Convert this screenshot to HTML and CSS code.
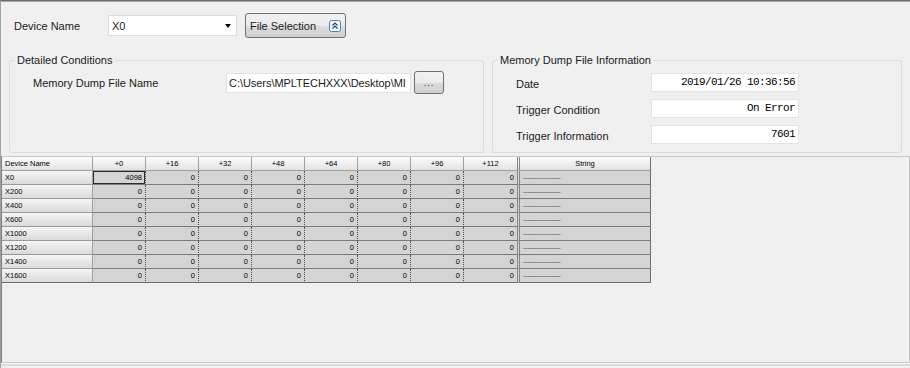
FILE: index.html
```html
<!DOCTYPE html>
<html lang="en">
<head>
  <meta charset="UTF-8">
  <title>Memory Dump</title>
  <link rel="stylesheet" href="styles.css">
</head>
<body>
  <div class="window">
    <div class="toolbar">
      <span class="device-label">Device Name</span>
      <div class="combo"><span>X0</span><span class="combo-arrow"></span></div>
      <button class="btn file-btn">
        <span>File Selection</span>
        <svg class="fold-icon" width="12" height="12" viewBox="0 0 12 12">
          <rect x="0.5" y="0.5" width="11" height="11" rx="2" fill="#f4f8fc" stroke="#4d7fb8"/>
          <path d="M3.5 5.5 L6 3 L8.5 5.5 M3.5 8.5 L6 6 L8.5 8.5" fill="none" stroke="#1f3f6f" stroke-width="1.2"/>
        </svg>
      </button>
    </div>

    <div class="groups">
      <fieldset class="group cond">
        <legend>Detailed Conditions</legend>
        <div class="file-row">
          <span class="file-label">Memory Dump File Name</span>
          <div class="textbox path">C:\Users\MPLTECHXXX\Desktop\MI</div>
          <button class="btn browse">...</button>
        </div>
      </fieldset>

      <fieldset class="group info">
        <legend>Memory Dump File Information</legend>
        <div class="info-grid">
          <span class="info-label">Date</span><div class="textbox mono">2019/01/26 10:36:56</div>
          <span class="info-label">Trigger Condition</span><div class="textbox mono">On Error</div>
          <span class="info-label">Trigger Information</span><div class="textbox mono">7601</div>
        </div>
      </fieldset>
    </div>

    <div class="grid-panel">
      <table class="dump">
        <colgroup>
          <col class="c-name">
          <col class="c-val"><col class="c-val"><col class="c-val"><col class="c-val">
          <col class="c-val"><col class="c-val"><col class="c-val"><col class="c-val">
          <col class="c-str">
        </colgroup>
        <thead>
          <tr>
            <th class="h-name">Device Name</th>
            <th>+0</th><th>+16</th><th>+32</th><th>+48</th>
            <th>+64</th><th>+80</th><th>+96</th><th class="last-val">+112</th>
            <th class="h-str">String</th>
          </tr>
        </thead>
        <tbody id="dumpRows"></tbody>
      </table>
    </div>
    <div class="statusbar"></div>
  </div>

  <script>
    const devices = ['X0', 'X200', 'X400', 'X600', 'X1000', 'X1200', 'X1400', 'X1600'];
    const tbody = document.getElementById('dumpRows');
    let html = '';
    devices.forEach((name, i) => {
      html += `<tr><td class="row-head">${name}</td>`;
      for (let c = 0; c < 8; c++) {
        const first = i === 0 && c === 0;
        const cls = [first ? 'selected' : '', c === 7 ? 'last-val' : ''].join(' ').trim();
        html += `<td class="${cls}">${first ? 4098 : 0}</td>`;
      }
      html += `<td class="str">-----------------</td></tr>`;
    });
    tbody.innerHTML = html;
  </script>
</body>
</html>
```

FILE: styles.css
```css
body { margin: 0; background: #f0f0f0; font-family: "Liberation Sans", Arial, sans-serif; font-size: 11px; color: #1a1a1a; overflow: hidden; }
.window { height: 368px; box-sizing: border-box; border-top: 1px solid #6d6d6d; border-left: 1px solid #a0a0a0; box-shadow: inset 0 1px #a8a8a8; overflow: hidden; }

.toolbar { display: flex; align-items: center; height: 25px; padding: 12px 0 0 13px; }
.device-label { width: 94px; }
.combo { width: 129px; height: 21px; box-sizing: border-box; background: #fff; border: 1px solid #dcdcdc; display: flex; align-items: center; justify-content: space-between; padding-left: 3px; }
.combo-arrow { width: 0; height: 0; border-left: 3.5px solid transparent; border-right: 3.5px solid transparent; border-top: 4px solid #000; margin-right: 5px; }

.btn { font-family: inherit; font-size: 11px; color: #1a1a1a; border: 1px solid #707070; border-radius: 3px; background: linear-gradient(#f2f2f2 0%, #ebebeb 50%, #dddddd 51%, #cfcfcf 100%); box-sizing: border-box; padding: 0; }
.file-btn { margin-left: 8px; width: 101px; height: 25px; display: flex; align-items: center; justify-content: space-between; padding: 0 4px 0 4px; }
.fold-icon { display: block; }

.groups { display: flex; margin-top: 15px; padding-left: 8px; }
.group { margin: 0; padding: 0; border: 1px solid #d5dfe5; border-radius: 3px; height: 100px; box-sizing: border-box; min-width: 0; }
.group legend { padding: 0 2px; margin-left: 5px; line-height: 14px; }
.cond { width: 475px; }
.info { width: 410px; margin-left: 8px; }

.file-row { display: flex; align-items: center; margin-top: 4px; padding-left: 23px; height: 23px; }
.file-label { width: 193px; padding-top: 1px; }
.textbox { background: #fff; border: 1px solid #e3e3e3; box-sizing: border-box; white-space: nowrap; overflow: hidden; }
.path { width: 185px; height: 20px; line-height: 18px; padding-left: 2px; letter-spacing: -0.05px; }
.browse { width: 30px; height: 23px; margin-left: 3px; font-size: 9px; letter-spacing: 1px; }

.info-grid { display: grid; grid-template-columns: 135px 148px; grid-auto-rows: 19px; row-gap: 7px; align-items: center; margin-top: 6px; padding-left: 23px; }
.info-label { padding-top: 3px; }
.mono { height: 19px; line-height: 17px; text-align: right; padding-right: 3px; font-family: "Liberation Mono", "DejaVu Sans Mono", monospace; font-size: 11px; letter-spacing: -0.6px; color: #000; }

.grid-panel { margin-top: 3px; height: 207px; box-sizing: border-box; border: 1px solid #c8c8c8; border-left-color: #808080; }
.dump { table-layout: fixed; width: 649px; border-collapse: separate; border-spacing: 0; font-size: 7.5px; color: #000; }
.c-name { width: 91px; }
.c-val { width: 53px; }
.c-str { width: 134px; }
.dump th, .dump td { padding: 0; line-height: 13px; white-space: nowrap; overflow: hidden; }
.dump th { font-weight: normal; background: linear-gradient(#fdfdfd, #e2e2e2); border-right: 1px solid #a0a0a0; border-bottom: 1px solid #a0a0a0; text-align: center; }
.dump th.h-name { text-align: left; padding-left: 3px; }
.dump td { background: #d4d4d4; text-align: right; padding-right: 3px; border-right: 1px dotted #505050; border-bottom: 1px solid #7c7c7c; }
.dump td.row-head { background: linear-gradient(#f6f6f6, #dadada); text-align: left; padding: 0 0 0 3px; border-right: 1px solid #a0a0a0; border-bottom: 1px solid #9a9a9a; }
.dump .last-val { border-right: none; }
.dump .h-str, .dump td.str { border-left: 3px double #858585; border-right: 1px solid #6e6e6e; }
.dump td.str { text-align: left; padding: 0 0 0 3px; color: #5a4a4a; letter-spacing: -0.3px; }
.dump td.selected { box-shadow: inset 0 0 0 1px #2a2a2a; }
.dump tbody tr:last-child td { border-bottom-color: #6e6e6e; }

.statusbar { height: 6px; border-top: 1px solid #fafafa; box-shadow: 0 2px 0 #dcdcdc inset; }
```
